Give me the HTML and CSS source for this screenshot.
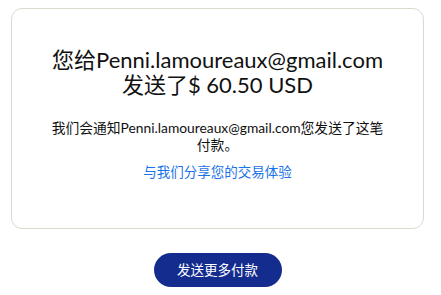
FILE: index.html
```html
<html lang="zh">
<head>
    <meta charset="utf-8">
    <link rel="stylesheet" href="styles.css">
</head>
<body>
<div class="page">
    <div class="card">
        <h1 class="title">您给Penni.lamoureaux@gmail.com<br>发送了$ 60.50 USD</h1>
        <p class="note">我们会通知Penni.lamoureaux@gmail.com您发送了这笔付款。</p>
        <a class="share" href="#">与我们分享您的交易体验</a>
    </div>
    <div class="actions">
        <a class="btn" href="#">发送更多付款</a>
    </div>
</div>
</body>
</html>
```

FILE: styles.css
```css
* {
    margin: 0;
    padding: 0;
}
body {
    background: #fff;
    font-family: "Lato", "Noto Sans CJK SC", sans-serif;
    color: #111;
}
.page {
    width: 413px;
    margin: 8px 0 0 11px;
}
.card {
    border: 1px solid #dcdad0;
    border-radius: 11px;
    box-sizing: border-box;
    height: 221px;
    display: flex;
    flex-direction: column;
    align-items: center;
    padding: 38px 20px 0;
    text-align: center;
}
.title {
    font-size: 22px;
    font-weight: normal;
    line-height: 25px;
    color: #111;
}
.note {
    margin-top: 22px;
    font-size: 13.8px;
    line-height: 17px;
    width: 342px;
}
.share {
    margin-top: 11px;
    font-size: 13.5px;
    line-height: 17px;
    color: #1a73e8;
    text-decoration: none;
}
.actions {
    display: flex;
    justify-content: center;
    margin-top: 24px;
}
.btn {
    display: block;
    width: 128px;
    height: 34px;
    line-height: 34px;
    border-radius: 17px;
    background: #142c8e;
    color: #fff;
    font-size: 13.5px;
    text-align: center;
    text-decoration: none;
}
```
